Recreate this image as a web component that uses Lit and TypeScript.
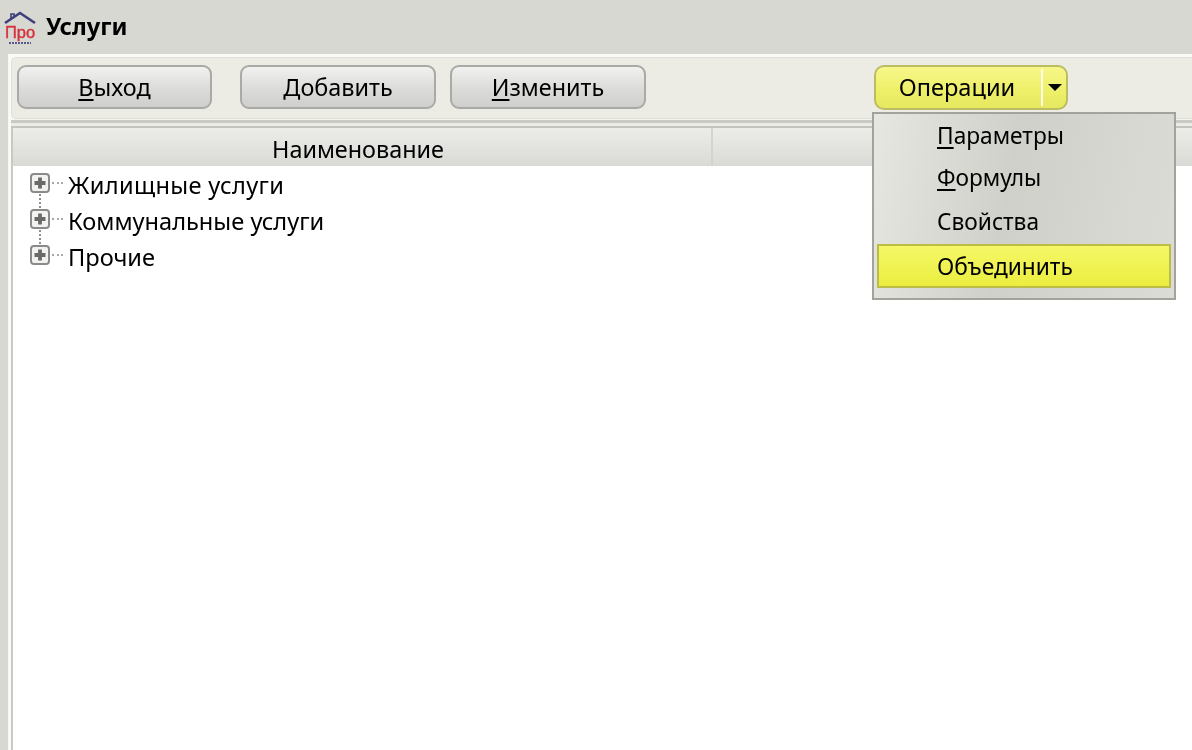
import { LitElement, html, css, svg } from "lit";
import { customElement } from "lit/decorators.js";

const plus = svg`<svg class="exp" width="20" height="20" viewBox="0 0 20 20"><rect x="1" y="1" width="18" height="18" rx="3" fill="#f2f2f0" stroke="#8a8a8a" stroke-width="2"/><path d="M10 4.5v11M4.5 10h11" stroke="#6a6a6a" stroke-width="3.8"/></svg>`;

@customElement("app-root")
export class AppRoot extends LitElement {
  static styles = css`
    :host { display: block; width: 1192px; height: 750px; overflow: hidden; position: relative; background: #d8d8d3; font-family: "Noto Sans", "Open Sans", sans-serif; font-size: 23.4px; color: #000; filter: blur(0.45px); }
    * { box-sizing: border-box; }
    .title { height: 54px; display: flex; align-items: center; padding: 0 0 0 4px; gap: 8px; }
    .title svg { display: block; margin-top: 3px; }
    .title b { font-size: 23.7px; font-weight: 700; color: #000; margin-top: -3px; }
    .frame { height: 696px; margin-left: 8px; background: #fafaf6; padding: 3px 0 0 2px; border-left: 1px solid #f7f7f2; }
    .toolbar { height: 62px; background: #ecece5; border: 1px solid #e0e0da; border-right: none; border-radius: 5px 0 0 5px; padding: 7px 0 0 5px; display: flex; }
    .btn { height: 44px; width: 196px; border: 2px solid #a9a9a5; border-radius: 9px; background: linear-gradient(#f1f1ef, #dbdbd9 55%, #cfcfcd); display: flex; align-items: center; justify-content: center; }
    .btn.b1 { width: 195px; margin-right: 28px; }
    .btn.b2 { margin-right: 14px; }
    u { text-underline-offset: 3px; text-decoration-thickness: 2px; }
    .split { margin-left: 228px; width: 194px; height: 45px; border: 2px solid #bcbc62; border-radius: 10px; background: linear-gradient(#f7f78a, #eef06a 55%, #e6e85f); display: flex; align-items: stretch; font-size: 23.6px; }
    .split .lab { width: 165px; display: flex; align-items: center; justify-content: center; padding: 0 3px 2px 0; }
    .split .sep { width: 2px; background: #fdfde8; margin: 2px 0; }
    .split .arr { flex: 1; display: flex; align-items: center; justify-content: center; }
    .tri { width: 0; height: 0; border-left: 7px solid transparent; border-right: 7px solid transparent; border-top: 7px solid #000; }
    .gap { height: 9px; background: linear-gradient(#f4f4ef 0 1px, #c9c9c3 1px 4px, #ecece7 4px 7px, #c4c4be 7px); }
    .table { background: #fff; height: 630px; border-left: 2px solid #c9c9c3; }
    .head { height: 38px; background: linear-gradient(#ecece8, #d9d9d5); display: flex; }
    .head .c1 { width: 700px; display: flex; align-items: center; justify-content: center; border-right: 2px solid #d3d3d0; padding: 3px 8px 0 0; }
    .tree { position: relative; padding: 1px 0 0 17px; font-size: 23.6px; }
    .row { height: 36px; display: flex; align-items: center; position: relative; }
    .row.wide span { letter-spacing: 0.35px; }
    .exp { display: block; flex: none; position: relative; z-index: 1; margin-top: -5px; }
    .dash { width: 11px; border-top: 2px dotted #a8a8a8; margin: -5px 5px 0 2px; flex: none; }
    .row span { white-space: nowrap; }
    .vline { position: absolute; left: 26px; top: 20px; height: 62px; border-left: 2px dotted #8f8f8f; }
    .menu { position: absolute; left: 872px; top: 112px; width: 304px; height: 188px; border: 2px solid #a3a39e; background: linear-gradient(100deg, #e6e7e1, #d0d0cb 45%, #dcdcd7); padding: 1px 3px 0; font-size: 22.7px; }
    .mi { height: 45px; display: flex; align-items: center; padding-left: 60px; }
    .mi.first { height: 41px; }
    .mi.second { height: 43px; }
    .mi.sel { height: 44px; margin-top: 0; background: linear-gradient(#f5f767, #ebee3f); border: 2px solid #bcbd45; padding-left: 58px; }
  `;
  render() {
    return html`
      <div class="title">
        <svg width="34" height="36" viewBox="0 0 34 36">
          <path d="M1 12 16 2l15 10" fill="none" stroke="#3f3f7c" stroke-width="2.6"/>
          <path d="M7 7V3h3v2" fill="none" stroke="#3f3f7c" stroke-width="1.6"/>
          <text x="16" y="27" text-anchor="middle" font-family="Liberation Sans" font-size="16.5" fill="#d6313c" stroke="#d6313c" stroke-width="0.4">Про</text>
          <path d="M5 32h22" stroke="#5a5a90" stroke-width="2" stroke-dasharray="2 1"/>
        </svg>
        <b>Услуги</b>
      </div>
      <div class="frame">
        <div class="toolbar">
          <div class="btn b1"><span><u>В</u>ыход</span></div>
          <div class="btn b2"><span><u>Д</u>обавить</span></div>
          <div class="btn"><span><u>И</u>зменить</span></div>
          <div class="split">
            <div class="lab">Операции</div>
            <div class="sep"></div>
            <div class="arr"><div class="tri"></div></div>
          </div>
        </div>
        <div class="gap"></div>
        <div class="table">
          <div class="head"><div class="c1">Наименование</div></div>
          <div class="tree">
            <div class="vline"></div>
            <div class="row wide">${plus}<div class="dash"></div><span>Жилищные услуги</span></div>
            <div class="row">${plus}<div class="dash"></div><span>Коммунальные услуги</span></div>
            <div class="row">${plus}<div class="dash"></div><span>Прочие</span></div>
          </div>
        </div>
      </div>
      <div class="menu">
        <div class="mi first"><span><u>П</u>араметры</span></div>
        <div class="mi second"><span><u>Ф</u>ормулы</span></div>
        <div class="mi"><span>Свойства</span></div>
        <div class="mi sel"><span>Объединить</span></div>
      </div>
    `;
  }
}
